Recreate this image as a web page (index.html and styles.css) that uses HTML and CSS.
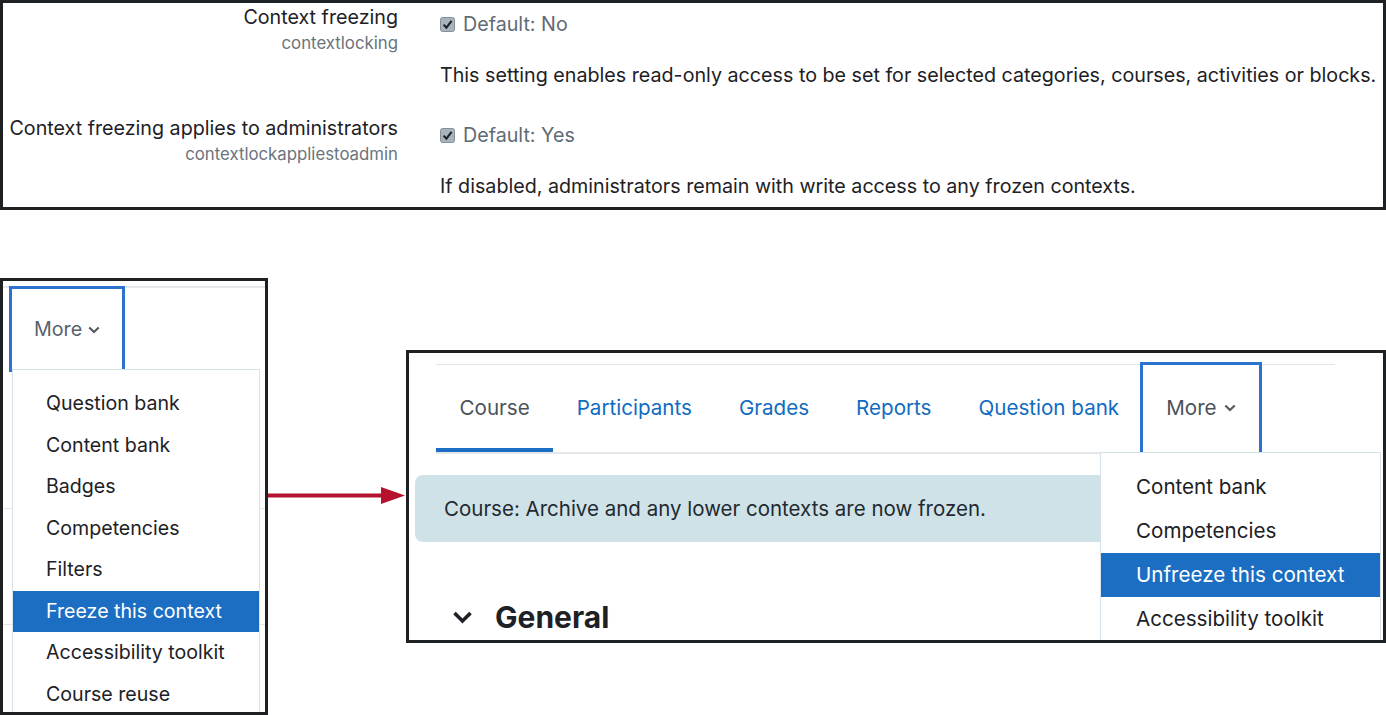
FILE: index.html
```html
<!DOCTYPE html>
<html lang="en">
<head>
<meta charset="utf-8">
<title>Context freezing</title>
<link rel="stylesheet" href="styles.css">
</head>
<body>
<section class="settings">
  <div class="setting first">
    <div class="label">
      <div class="name">Context freezing</div>
      <div class="short">contextlocking</div>
    </div>
    <div class="control">
      <div class="default"><svg class="check" width="15" height="15" viewBox="0 0 15 15"><rect x="0.5" y="0.5" width="14" height="14" rx="2" fill="#a9b3bb" stroke="#84909a"/><path d="M3.6 7.6 L6.4 10.6 L11.6 3.8" fill="none" stroke="#1d2125" stroke-width="2"/></svg>Default: No</div>
      <div class="desc">This setting enables read-only access to be set for selected categories, courses, activities or blocks.</div>
    </div>
  </div>
  <div class="setting">
    <div class="label">
      <div class="name">Context freezing applies to administrators</div>
      <div class="short">contextlockappliestoadmin</div>
    </div>
    <div class="control">
      <div class="default"><svg class="check" width="15" height="15" viewBox="0 0 15 15"><rect x="0.5" y="0.5" width="14" height="14" rx="2" fill="#a9b3bb" stroke="#84909a"/><path d="M3.6 7.6 L6.4 10.6 L11.6 3.8" fill="none" stroke="#1d2125" stroke-width="2"/></svg>Default: Yes</div>
      <div class="desc">If disabled, administrators remain with write access to any frozen contexts.</div>
    </div>
  </div>
</section>

<section class="bottom">
  <div class="panel-left">
    <div class="more-box">More<svg class="chev" width="12" height="8" viewBox="0 0 12 8"><path d="M1.3 1.5 L6 6 L10.7 1.5" fill="none" stroke="#525b63" stroke-width="2.2"/></svg></div>
    <ul class="menu menu-left">
      <li>Question bank</li>
      <li>Content bank</li>
      <li>Badges</li>
      <li>Competencies</li>
      <li>Filters</li>
      <li class="active">Freeze this context</li>
      <li>Accessibility toolkit</li>
      <li>Course reuse</li>
    </ul>
  </div>

  <div class="arrow">
    <svg width="138" height="17" viewBox="0 0 138 17"><rect x="0" y="6.5" width="117" height="4" fill="#b5132d"/><polygon points="114,0 138,8.5 114,17" fill="#b5132d"/></svg>
  </div>

  <div class="panel-right">
    <nav class="course-nav">
      <ul class="tabs">
        <li class="tab active">Course</li>
        <li class="tab">Participants</li>
        <li class="tab">Grades</li>
        <li class="tab">Reports</li>
        <li class="tab">Question bank</li>
        <li class="tab more">More<svg class="chev" width="12" height="8" viewBox="0 0 12 8"><path d="M1.3 1.5 L6 6 L10.7 1.5" fill="none" stroke="#525b63" stroke-width="2.2"/></svg></li>
      </ul>
    </nav>
    <div class="alert">Course: Archive and any lower contexts are now frozen.</div>
    <h2 class="section-title"><svg width="21" height="15" viewBox="0 0 21 15"><path d="M2.5 3 L10.5 11 L18.5 3" fill="none" stroke="#1d2125" stroke-width="3.6"/></svg>General</h2>
    <ul class="menu menu-right">
      <li>Content bank</li>
      <li>Competencies</li>
      <li class="active">Unfreeze this context</li>
      <li>Accessibility toolkit</li>
    </ul>
  </div>
</section>
</body>
</html>
```

FILE: styles.css
```css
* { box-sizing: border-box; }
html, body { margin: 0; padding: 0; background: #fff; }
body {
  width: 1386px;
  height: 715px;
  overflow: hidden;
  font-family: Inter, "Noto Sans", sans-serif;
  color: #1d2125;
}

/* ---------- top settings panel ---------- */
.settings {
  height: 210px;
  border: 3px solid #1e2124;
}
.setting {
  display: grid;
  grid-template-columns: 395px 1fr;
  column-gap: 42px;
}
.setting.first { height: 111px; }
.label { text-align: right; padding-top: 1px; }
.name { font-size: 19.7px; line-height: 26px; }
.short { font-size: 16.8px; line-height: 26px; color: #6a747d; }
.control { padding-top: 8px; }
.default {
  display: flex;
  align-items: center;
  gap: 8px;
  font-size: 19.7px;
  line-height: 26px;
  color: #5f6b74;
}
.desc { margin-top: 25px; font-size: 19.7px; line-height: 26px; }

/* ---------- bottom area ---------- */
.bottom {
  display: flex;
  align-items: flex-start;
  padding-top: 68px;
}

.panel-left {
  position: relative;
  width: 268px;
  height: 437px;
  flex: none;
  overflow: hidden;
  border: 3px solid #1e2124;
  background-image:
    linear-gradient(#e6e9ec, #e6e9ec),
    linear-gradient(#e6e9ec, #e6e9ec),
    linear-gradient(#e6e9ec, #e6e9ec);
  background-repeat: no-repeat;
  background-size: 100% 2px, 100% 1px, 100% 1px;
  background-position: 0 5px, 0 227px, 0 343px;
}
.more-box {
  margin: 5px 0 0 6px;
  width: 116px;
  height: 86px;
  border: 3px solid #2b73cf;
  border-bottom: none;
  display: flex;
  align-items: center;
  gap: 6px;
  padding: 0 0 3px 22px;
  font-size: 19.7px;
  color: #59636c;
  background: #fff;
}
.chev { display: block; margin-top: 1px; }

.menu {
  list-style: none;
  margin: 0;
  background: #fff;
  border: 1px solid #d6e2e8;
}
.menu li { white-space: nowrap; }
.menu li.active { background: #1b6ec2; color: #fff; }

.menu-left {
  position: relative;
  margin: -3px 0 0 9px;
  width: 248px;
  height: 360px;
  padding: 13px 0 0;
}
.menu-left li {
  line-height: 41.5px;
  padding-left: 33px;
  font-size: 19.6px;
}

.arrow {
  flex: none;
  width: 138px;
  height: 17px;
  margin-top: 209px;
  margin-left: -1px;
}
.arrow svg { display: block; }

.panel-right {
  position: relative;
  flex: none;
  width: 980px;
  height: 293px;
  margin-top: 72px;
  margin-left: 1px;
  overflow: hidden;
  border: 3px solid #1e2124;
}
.course-nav {
  margin: 11px 0 0 27px;
  width: 899px;
  border-top: 1px solid #e1e5e8;
}
.tabs {
  display: flex;
  list-style: none;
  margin: 0;
  padding: 0;
  border-bottom: 2px solid #e4e7ea;
}
.tab {
  height: 87px;
  padding: 0 23.5px 2px;
  display: flex;
  align-items: center;
  gap: 7px;
  font-size: 20.6px;
  color: #0f6cbf;
  white-space: nowrap;
}
.tab.active { color: #4b535a; box-shadow: inset 0 -4px 0 #1b6ec2; }
.tab.more { color: #4b535a; outline: 3px solid #2b73cf; }

.alert {
  margin: 21px 0 0 6px;
  width: 940px;
  height: 67px;
  border-radius: 8px;
  background: #cfe2e8;
  display: flex;
  align-items: center;
  padding-left: 29px;
  font-size: 20.5px;
  color: #1f2a30;
}

.section-title {
  margin: 57px 0 0 43px;
  display: flex;
  align-items: center;
  gap: 22px;
  font-size: 30px;
  font-weight: 700;
  line-height: 36px;
  color: #1d2125;
}
.section-title svg { display: block; }

.menu-right {
  position: absolute;
  left: 691px;
  top: 99px;
  width: 281px;
  height: 220px;
  padding: 12px 0 0;
}
.menu-right li {
  line-height: 44px;
  padding-left: 35px;
  font-size: 20.6px;
}
```
